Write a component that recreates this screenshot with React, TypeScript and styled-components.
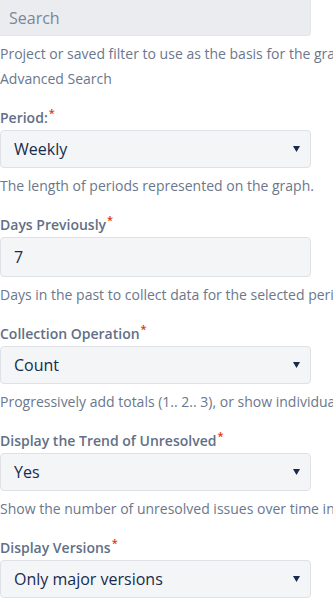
import styled, { createGlobalStyle } from 'styled-components';

const GlobalStyle = createGlobalStyle`
    html, body {
        margin: 0;
        padding: 0;
        background: #ffffff;
        overflow: hidden;
    }
    body {
        font-family: "Open Sans", "Noto Sans", sans-serif;
        -webkit-font-smoothing: antialiased;
    }
`;

const Form = styled.form`
    width: 333px;
    display: flex;
    flex-direction: column;
    white-space: nowrap;
    overflow: hidden;
`;

const Field = styled.div`
    display: flex;
    flex-direction: column;
    margin-bottom: 19px;
`;

const Label = styled.label`
    font-size: 14px;
    line-height: 20px;
    font-weight: 600;
    color: #626f86;
    margin-bottom: 2px;
`;

const Required = styled.sup`
    color: #de350b;
    font-size: 11px;
    line-height: 0;
    margin-left: 1px;
`;

const Control = styled.div<{ $muted?: boolean; $tall?: boolean }>`
    box-sizing: border-box;
    width: 311px;
    height: ${p => (p.$tall ? '40px' : '38px')};
    display: flex;
    align-items: center;
    justify-content: space-between;
    padding: 0 10px 0 13px;
    background: ${p => (p.$muted ? '#ebecf0' : '#f4f5f7')};
    border: 1px solid ${p => (p.$muted ? '#e4e5e9' : '#dfe1e6')};
    border-radius: 4px;
    font-size: 16px;
    color: #172b4d;
`;

const SearchControl = styled(Control)`
    margin-top: -2px;
    border-top: none;
    border-left: none;
    padding: 2px 0 0 9px;
    border-radius: 0 0 4px 0;
`;

const Placeholder = styled.span`
    color: #7a869a;
`;

const Caret = styled.svg`
    width: 7px;
    height: 6px;
    flex-shrink: 0;
`;

const Help = styled.div`
    margin-top: 8px;
    font-size: 14px;
    line-height: 20px;
    color: #6b778c;
`;

const HelpLink = styled.div`
    font-size: 14px;
    line-height: 20px;
    margin-top: 5px;
    color: #6b778c;
`;

function SelectBox({ value }: { value: string }) {
    return (
        <Control>
            <span>{value}</span>
            <Caret viewBox="0 0 7 6">
                <path d="M0 0h7L3.5 6z" fill="#172b4d" />
            </Caret>
        </Control>
    );
}

const fields = [
    { label: 'Period:', value: 'Weekly', select: true, help: 'The length of periods represented on the graph.' },
    { label: 'Days Previously', value: '7', select: false, help: 'Days in the past to collect data for the selected period.' },
    { label: 'Collection Operation', value: 'Count', select: true, help: 'Progressively add totals (1.. 2.. 3), or show individual values (1, 1, 1).' },
    { label: 'Display the Trend of Unresolved', value: 'Yes', select: true, help: 'Show the number of unresolved issues over time in a subgraph.' },
    { label: 'Display Versions', value: 'Only major versions', select: true, help: '' },
];

export default function App() {
    return (
        <>
            <GlobalStyle />
            <Form>
                <Field>
                    <SearchControl $muted>
                        <Placeholder>Search</Placeholder>
                    </SearchControl>
                    <Help>Project or saved filter to use as the basis for the graph.</Help>
                    <HelpLink>Advanced Search</HelpLink>
                </Field>
                {fields.map(f => (
                    <Field key={f.label}>
                        <Label>
                            {f.label}
                            <Required>*</Required>
                        </Label>
                        {f.select ? (
                            <SelectBox value={f.value} />
                        ) : (
                            <Control $tall>
                                <span>{f.value}</span>
                            </Control>
                        )}
                        {f.help && <Help>{f.help}</Help>}
                    </Field>
                ))}
            </Form>
        </>
    );
}
